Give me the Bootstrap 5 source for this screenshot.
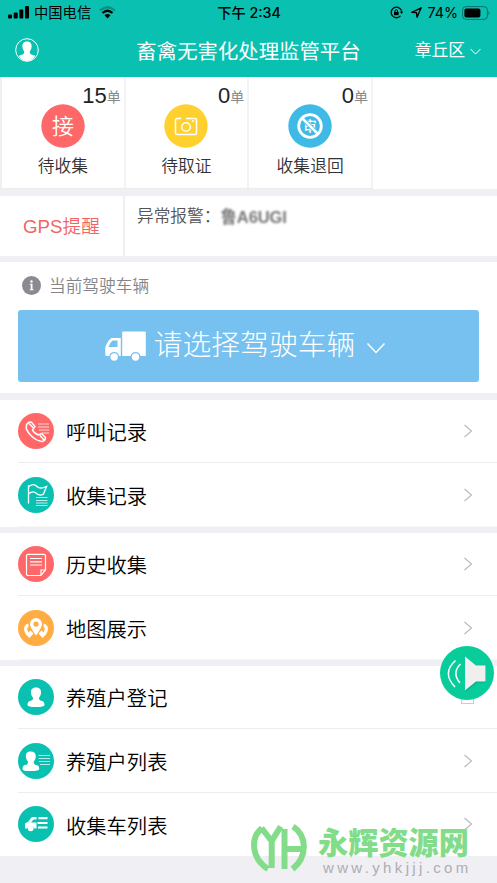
<!DOCTYPE html>
<html lang="zh-CN">
<head>
<meta charset="utf-8">
<meta name="viewport" content="width=device-width, initial-scale=1">
<title>畜禽无害化处理监管平台</title>
<link href="https://cdn.jsdelivr.net/npm/bootstrap@5.3.0/dist/css/bootstrap.min.css" rel="stylesheet">
<style>
html,body{height:100%;overflow:hidden}
body{background:#efeff4;font-family:"Liberation Sans","Noto Sans CJK SC",sans-serif;color:#000;line-height:1;font-weight:350}
svg{display:block;flex:none}
.screen{width:497px;height:883px;overflow:hidden}
.topbar{background:#0ac1b1;height:77px}
.status{height:26px;font-family:Inter,"Noto Sans CJK SC",sans-serif;font-size:14.3px;font-weight:400;padding:0 7px 0 8px}
.status>div{flex:1 1 0}
.carrier{margin-left:5px}
.percent{margin-left:5px}
.clock{font-size:14.2px}
.titlebar{height:51px;padding:0 15px 3px;color:#fff}
.titlebar h1{font-size:20.4px;font-weight:400;line-height:1;padding-top:5px}
.titlebar .side{flex:1 1 0}
.region{font-size:16.8px;font-weight:400}
.region span{padding-top:2px}
.stats{height:112px;border-left:2px solid #f0f0f2;border-bottom:1px solid #ececee;width:373px}
.stat{border-right:2px solid #f3f3f5;color:#333}
.stat .num{font-size:22px;height:27px;padding:7px 3px 0 0;color:#222;line-height:23px;font-weight:400}
.stat .unit{font-size:14px;color:#888;line-height:27px}
.stat .name{font-size:16.8px;margin-top:10px;line-height:18px}
.gps{height:60px}
.gps-label{width:125px;border-right:2px solid #f0f0f3;color:#f26464;font-size:18.7px;padding-top:3px}
.gps-msg{font-size:16.7px;color:#555;padding:13px 0 0 12px;height:60px}
.plate{filter:blur(1.2px);color:#777;font-size:16.5px;font-weight:700;letter-spacing:-.1px}
.vehicle{height:131px;padding:0 18px}
.vehicle-tip{height:48px;font-size:16.7px;color:#858589;padding-left:4px}
.tip-icon{margin-right:7px}
.pick{height:72px;background:#76c1f0;border-radius:3px;color:#fff;font-size:28.8px;border:0;font-weight:300;padding:0 6px 0 0}
.pick-arrow{margin-left:11px}
.gap-y{height:7px}
.gap-s{height:5.8px}
.menu-row{height:63.6px;margin-left:18px;padding-right:24px;font-size:20.3px;border-bottom:1px solid #ededf0}
.menu-row:last-child{border-bottom-color:#f6f6f8}
.menu-row .txt{margin-left:12px;padding-top:5px}
.menu-end{height:190px;overflow:hidden}
.speaker{left:439px;top:646px}
.nub{left:461px;top:696px;width:13px;height:8px;border:1px solid #ccc;background:#fff}
.wm{left:250px;top:822px}
.wm-name{left:318px;top:829px;font-size:30.2px;font-weight:900;color:#83dc89;white-space:nowrap;line-height:30px}
.wm-url{left:323px;top:861px;font-size:15px;letter-spacing:3.35px;color:#aeaeb2;white-space:nowrap;line-height:14px;font-weight:400}
</style>
</head>
<body>
<div class="screen position-relative">
<header class="topbar">
  <div class="status d-flex align-items-center">
    <div class="d-flex align-items-center">
      <svg width="21" height="13" viewBox="0 0 21 13"><rect y="8.500" width="4" height="4" rx="1"/><rect x="5.700" y="6.500" width="4" height="6" rx="1"/><rect x="11.300" y="3.500" width="4" height="9" rx="1"/><rect x="17" width="4" height="12.500" rx="1"/></svg>
      <span class="carrier">中国电信</span>
      <svg class="ms-2" width="17" height="13" viewBox="0 0 17 13" fill="none" stroke="#000" stroke-width="2.300"><path d="M1 4.500Q8.500-2 16 4.500" opacity=".25"/><path d="M3.500 7Q8.500 2.500 13.500 7"/><path d="M5.500 9.300Q8.500 6.700 11.500 9.300L8.500 12.500Z" fill="#000" stroke="none"/></svg>
    </div>
    <span class="clock fw-medium">下午 2:34</span>
    <div class="d-flex align-items-center justify-content-end">
      <svg width="13" height="13" viewBox="0 0 13 13" fill="none" stroke="#000" stroke-width="1.300"><path d="M11.300 4.200A5.300 5.300 0 1 0 10.500 9.900M11.600 4.500V7"/><path d="M10 5.800H13L11.500 8Z" fill="#000" stroke="none"/><rect x="4" y="6" width="4.600" height="3.200" fill="#000" stroke="none"/><path d="M5 6V5a1.300 1.300 0 0 1 2.600 0V6" stroke-width="1"/></svg>
      <svg class="ms-2" width="11" height="11" viewBox="0 0 11 11" fill="none" stroke="#000" stroke-width="1.400" stroke-linejoin="round"><path d="M.8 5.300 10.200.8 6 10.200 5.400 5.600Z"/></svg>
      <span class="percent">74%</span>
      <svg class="ms-1" width="28" height="14" viewBox="0 0 28 14"><rect x=".6" y=".6" width="24.800" height="12.800" rx="3.500" fill="none" stroke="#000" stroke-opacity=".4"/><rect x="2.400" y="2.400" width="16" height="9.200" rx="2"/><path d="M26.500 5q2 2 0 4Z" opacity=".45"/></svg>
    </div>
  </div>
  <div class="titlebar d-flex align-items-center">
    <div class="side"><svg width="24" height="24" viewBox="0 0 24 24"><circle cx="12" cy="12" r="11.300" fill="none" stroke="#fff"/><path d="M12 3.500c3.300 0 4.800 2.200 4.600 5.200-.1 2.400-1 3.500-1.800 4.800 0 2.300.4 2.800 5.400 4.300Q17 23 12 23T3.800 17.800c5-1.500 5.400-2 5.400-4.300-.8-1.300-1.700-2.400-1.800-4.800-.2-3 1.300-5.200 4.600-5.200Z" fill="#fff"/></svg></div>
    <h1 class="m-0">畜禽无害化处理监管平台</h1>
    <div class="side region d-flex align-items-center justify-content-end"><span>章丘区</span><svg class="ms-1 mt-1" width="13" height="7" viewBox="0 0 13 7" fill="none" stroke="#fff"><path d="M1.500 1 6.500 6 11.500 1"/></svg></div>
  </div>
</header>
<main>
  <div class="bg-white">
  <section class="stats d-flex bg-white">
    <div class="stat col-4"><div class="num d-flex justify-content-end">15<span class="unit">单</span></div>
      <svg class="mx-auto" width="44" height="44" viewBox="0 0 44 44"><circle cx="22" cy="22" r="21.700" fill="#ff6868"/><text x="22" y="30" text-anchor="middle" font-size="22" fill="#fff">接</text></svg>
      <div class="name text-center">待收集</div></div>
    <div class="stat col-4"><div class="num d-flex justify-content-end">0<span class="unit">单</span></div>
      <svg class="mx-auto" width="44" height="44" viewBox="0 0 44 44"><circle cx="22" cy="22" r="21.700" fill="#ffd02e"/><g fill="none" stroke="#fff" stroke-width="1.500"><path d="M17 14.500h-4a1.500 1.500 0 0 0-1.500 1.500v13a1.500 1.500 0 0 0 1.500 1.500h18a1.500 1.500 0 0 0 1.500-1.500V16a1.500 1.500 0 0 0-1.500-1.500h-9M28 17h2"/><circle cx="22" cy="23" r="4.300"/></g></svg>
      <div class="name text-center">待取证</div></div>
    <div class="stat col-4"><div class="num d-flex justify-content-end">0<span class="unit">单</span></div>
      <svg class="mx-auto" width="44" height="44" viewBox="0 0 44 44"><circle cx="22" cy="22" r="21.700" fill="#3fbae6"/><text x="22" y="27" text-anchor="middle" font-size="13.500" font-weight="500" fill="#fff">审</text><path d="M14 14 30 30" stroke="#3fbae6" stroke-width="4"/><g fill="none" stroke="#fff" stroke-width="2.800"><circle cx="22" cy="22" r="11.300"/><path d="M14 14 30 30" stroke-width="2.500"/></g></svg>
      <div class="name text-center">收集退回</div></div>
  </section></div>
  <div class="gap-y"></div>
  <section class="gps d-flex bg-white">
    <div class="gps-label d-flex align-items-center justify-content-center">GPS提醒</div>
    <div class="gps-msg d-flex align-items-start">异常报警：<span class="plate">鲁A6UGI</span></div>
  </section>
  <div class="gap-s"></div>
  <section class="vehicle bg-white">
    <div class="vehicle-tip d-flex align-items-center"><svg class="tip-icon" width="20" height="20" viewBox="0 0 20 20"><circle cx="9.500" cy="9.500" r="9.500" fill="#8a8a90"/><path d="M7.800 7.700h2.700v5.600h1v1H7.700v-1h1V8.700h-.9Z" fill="#fff"/><circle cx="9.500" cy="5.500" r="1.200" fill="#fff"/></svg><span class="pt-1">当前驾驶车辆</span></div>
    <button type="button" class="pick w-100 d-flex align-items-center justify-content-center">
      <svg width="41" height="30" viewBox="0 0 41 30" fill="#fff"><path d="M18 .5h22a.8.8 0 0 1 .8.800v23a.8.8 0 0 1-.8.800h-4.600a5 5 0 0 0-9.800 0H17.200V1.300a.8.8 0 0 1 .8-.800Z"/><path fill-rule="evenodd" d="M6.500 7h9.300v18.100h-1.700a5 5 0 0 0-9.800 0H1.200A1 1 0 0 1 .3 24v-8Q3.500 8.500 6.500 7ZM7.500 9.500Q4.500 12 3.500 16h9V9.500Z"/><circle cx="9.200" cy="26" r="3.700"/><circle cx="30.500" cy="26" r="3.700"/></svg>
      <span class="ms-2">请选择驾驶车辆</span>
      <svg class="mt-1 pick-arrow" width="20" height="12" viewBox="0 0 20 12" fill="none" stroke="#fff" stroke-width="1.500"><path d="M1.500 1.500 10 10.500 18.500 1.500"/></svg>
    </button>
  </section>
  <div class="gap-y"></div>
  <section class="bg-white">
    <div class="menu-row d-flex align-items-center"><svg width="36" height="36" viewBox="0 0 36 36" fill="none" stroke="#fff" stroke-width="1.500"><circle cx="18" cy="18" r="18" fill="#ff6868" stroke="none"/><path d="M9 11Q11 8.500 13.500 9.300L17 13.500 14.500 17Q16 20.500 20.500 22L23.500 20.500 27.500 24.500Q27.500 27.500 24.500 28.500 18 28 12.500 22T8.500 13Q8.300 12 9 11ZM11 10.500 15.500 15M22 22.500 26 27" stroke-linejoin="round"/><path d="M20 11h11M20 14h11M21 17h10M24 20h7" stroke-width="1" opacity=".75"/></svg><span class="txt">呼叫记录</span><svg class="ms-auto" width="10" height="14" viewBox="0 0 10 14" fill="none" stroke="#bbb" stroke-width="1.200"><path d="M1.500 1 8.500 7 1.500 13"/></svg></div>
    <div class="menu-row d-flex align-items-center"><svg width="36" height="36" viewBox="0 0 36 36" fill="none" stroke="#fff" stroke-width="1.300"><circle cx="18" cy="18" r="18" fill="#0ac1b1" stroke="none"/><path d="M10.500 8V26.500M10.500 10Q15 5.500 19 9.500 22 12.500 28.500 9.500L25.500 17Q22 19.500 18.500 16.500 15 13 10.500 17"/><path d="M18 20.500h11.500M18 23.500h11.500M18 26h11.500M18 28.500h11.500" stroke-width="1" opacity=".75"/></svg><span class="txt">收集记录</span><svg class="ms-auto" width="10" height="14" viewBox="0 0 10 14" fill="none" stroke="#bbb" stroke-width="1.200"><path d="M1.500 1 8.500 7 1.500 13"/></svg></div>
  </section>
  <div class="gap-s"></div>
  <section class="bg-white">
    <div class="menu-row d-flex align-items-center"><svg width="36" height="36" viewBox="0 0 36 36" fill="none" stroke="#fff" stroke-width="1.200"><circle cx="18" cy="18" r="18" fill="#ff6868" stroke="none"/><path d="M10 8.300h16a1.500 1.500 0 0 1 1.500 1.500V24l-4.500 5.500H10A1.500 1.500 0 0 1 8.500 28V9.800A1.500 1.500 0 0 1 10 8.300ZM27.500 24H23v5.500M12 12.500h12M12 15.800h12M12 19h12"/></svg><span class="txt">历史收集</span><svg class="ms-auto" width="10" height="14" viewBox="0 0 10 14" fill="none" stroke="#bbb" stroke-width="1.200"><path d="M1.500 1 8.500 7 1.500 13"/></svg></div>
    <div class="menu-row d-flex align-items-center"><svg width="36" height="36" viewBox="0 0 36 36" fill="#fff"><circle cx="18" cy="18" r="18" fill="#ffad42"/><path fill-rule="evenodd" d="M18 8a6 6 0 0 1 6 6q0 3.500-6 11.500-6-8-6-11.500a6 6 0 0 1 6-6Zm0 3.500a2.600 2.600 0 1 0 0 5.200 2.600 2.600 0 0 0 0-5.200Z"/><path d="M10.500 13.500Q6 14.500 6 19q0 3 2.500 6l3 3 4-4.500-3-3-2 2Q8 18 10.500 17ZM25.500 13.500Q30 14.500 30 19q0 3-2.500 6l-3 3-4-4.500 3-3 2 2Q28 18 25.500 17Z"/></svg><span class="txt">地图展示</span><svg class="ms-auto" width="10" height="14" viewBox="0 0 10 14" fill="none" stroke="#bbb" stroke-width="1.200"><path d="M1.500 1 8.500 7 1.500 13"/></svg></div>
  </section>
  <div class="gap-s"></div>
  <section class="bg-white menu-end">
    <div class="menu-row d-flex align-items-center"><svg width="36" height="36" viewBox="0 0 36 36" fill="#fff"><circle cx="18" cy="18" r="18" fill="#0ac1b1"/><path d="M18 8.500c4 0 5.500 2.500 5 5.500-.2 2-1 3.500-2 4.500 0 2.500.5 3 3 3.500q2.500.5 2.500 4 0 2-8.500 2T9.500 26q0-3.500 2.500-4c2.500-.5 3-1 3-3.500-1-1-1.800-2.500-2-4.500-.5-3 1-5.500 5-5.500Z"/></svg><span class="txt">养殖户登记</span></div>
    <div class="menu-row d-flex align-items-center"><svg width="36" height="36" viewBox="0 0 36 36" fill="#fff"><circle cx="18" cy="18" r="18" fill="#0ac1b1"/><path d="M12.700 8.500c4 0 5.500 2.500 5 5.500-.2 2-1 3.500-2 4.500 0 2.500.5 3 3 3.500q2.500.5 2.500 4 0 2-8.500 2t-8.200-2q0-3.500 2.500-4c2.500-.5 3-1 3-3.500-1-1-1.800-2.500-2-4.500-.5-3 .7-5.500 4.700-5.500Z"/><path d="M20.500 12.500H32M20.500 15.500H32M21 18.500H32M22 21.500H32" stroke="#fff" opacity=".7"/></svg><span class="txt">养殖户列表</span><svg class="ms-auto" width="10" height="14" viewBox="0 0 10 14" fill="none" stroke="#bbb" stroke-width="1.200"><path d="M1.500 1 8.500 7 1.500 13"/></svg></div>
    <div class="menu-row d-flex align-items-center"><svg width="36" height="36" viewBox="0 0 36 36" fill="#fff"><circle cx="18" cy="18" r="18" fill="#0ac1b1"/><path fill-rule="evenodd" d="M18.500 11v2.500h-3L13 16.500h5.500v6h-2a4 4 0 0 0-7.500 0H7v-5l3.500-2L13 12q.5-1 2-1Z"/><circle cx="12.700" cy="22.300" r="2.900"/><path d="M20.500 12.200h9M19.500 17h10M20 21.500h9.500" stroke="#fff" stroke-width="2.200"/></svg><span class="txt">收集车列表</span><svg class="ms-auto" width="10" height="14" viewBox="0 0 10 14" fill="none" stroke="#bbb" stroke-width="1.200"><path d="M1.500 1 8.500 7 1.500 13"/></svg></div>
  </section>
</main>
<div class="nub position-absolute"></div>
<svg class="speaker position-absolute" width="56" height="56" viewBox="0 0 56 56"><circle cx="28" cy="27" r="27" fill="#08cd9a"/><path d="M26.500 11.500 38.500 20.500H47V36.500H38.500L26.500 45.500Z" fill="#088f6e" opacity=".5"/><path d="M26 10.500 37 19.500H46.500V35.500H37L26 44.500Z" fill="#efefef"/><path d="M16.500 14.500Q2.500 27 16 41M21.500 18Q12.500 27 21 37" fill="none" stroke="#fff" stroke-width="1.500"/></svg>
<svg class="wm position-absolute" width="68" height="52" viewBox="0 0 68 52" fill="none" stroke="#83dc89" stroke-width="6"><path d="M12 6C1 15 0 35 18 47M11.500 6 21.700 19 30.700 4.500M21.700 18V46M34.500 7V47M34.500 27H53M43 4.500C58 14 57 36 42.500 47"/></svg>
<div class="wm-name position-absolute">永辉资源网</div>
<div class="wm-url position-absolute">www.yhkjjj.com</div>
</div>
<script src="https://cdn.jsdelivr.net/npm/bootstrap@5.3.0/dist/js/bootstrap.bundle.min.js"></script>
</body>
</html>
